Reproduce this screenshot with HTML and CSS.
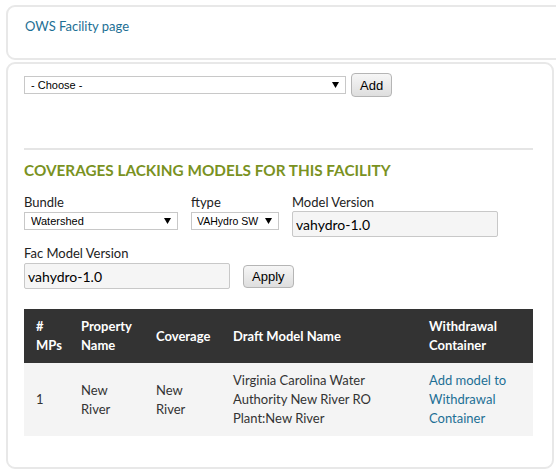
FILE: index.html
```html
<!DOCTYPE html>
<html>
<head>
<meta charset="utf-8">
<link rel="stylesheet" href="styles.css">
</head>
<body>
<div class="panel panel-top">
  <a class="link" href="#">OWS Facility page</a>
</div>
<div class="panel panel-main">
  <div class="row-add">
    <select class="sel sel-choose"><option>- Choose -</option></select>
    <button class="btn">Add</button>
  </div>
  <hr class="rule">
  <h2 class="heading">COVERAGES LACKING MODELS FOR THIS FACILITY</h2>
  <div class="filters">
    <div class="field">
      <label class="lbl">Bundle</label>
      <select class="sel sel-bundle"><option>Watershed</option></select>
    </div>
    <div class="field">
      <label class="lbl">ftype</label>
      <select class="sel sel-ftype"><option>VAHydro SW</option></select>
    </div>
    <div class="field">
      <label class="lbl">Model Version</label>
      <input class="inp inp-mv" type="text" value="vahydro-1.0">
    </div>
  </div>
  <div class="filters filters2">
    <div class="field">
      <label class="lbl">Fac Model Version</label>
      <input class="inp inp-fmv" type="text" value="vahydro-1.0">
    </div>
    <button class="btn btn-apply">Apply</button>
  </div>
  <table class="tbl">
    <thead>
      <tr>
        <th class="c1"># MPs</th>
        <th class="c2">Property Name</th>
        <th class="c3">Coverage</th>
        <th class="c4">Draft Model Name</th>
        <th class="c5">Withdrawal Container</th>
      </tr>
    </thead>
    <tbody>
      <tr>
        <td class="num">1</td>
        <td>New River</td>
        <td>New River</td>
        <td>Virginia Carolina Water Authority New River RO Plant:New River</td>
        <td><a class="link" href="#">Add model to Withdrawal Container</a></td>
      </tr>
    </tbody>
  </table>
</div>
</body>
</html>
```

FILE: styles.css
```css
html, body {
  margin: 0;
  padding: 0;
  background: #fff;
}
body {
  padding: 5px 2px 0 6px;
  font-family: Lato, "Open Sans", sans-serif;
  font-size: 13px;
  color: #333;
  overflow: hidden;
}
.panel {
  border: 2px solid #e8e8e8;
  border-radius: 9px;
  background: #fff;
}
.panel-top {
  height: 55px;
  margin-right: -20px;
  padding: 11px 0 0 17px;
  box-sizing: border-box;
}
.link {
  color: #1d6f94;
  text-decoration: none;
}
.panel-main {
  margin-top: 2px;
  height: 407px;
  box-sizing: border-box;
  padding: 9px 19px 0 16px;
}
.row-add {
  display: flex;
  align-items: center;
  gap: 5px;
  height: 24px;
}
.sel {
  appearance: none;
  -webkit-appearance: none;
  font-family: "Liberation Sans", Arial, sans-serif;
  font-size: 11px;
  height: 18px;
  line-height: 16px;
  border: 1px solid #c8c8c8;
  background-color: #fff;
  background-image: url("data:image/svg+xml;utf8,<svg xmlns='http://www.w3.org/2000/svg' width='7' height='6'><path d='M0 0 L7 0 L3.5 6 Z' fill='black'/></svg>");
  background-repeat: no-repeat;
  background-position: right 6px center;
  color: #000;
  padding: 0 4px 0 6px;
  border-radius: 0;
  box-sizing: border-box;
}
.sel-choose { width: 322px; }
.btn {
  font-family: "Liberation Sans", Arial, sans-serif;
  font-size: 13px;
  color: #000;
  height: 24px;
  padding: 0 8px;
  border: 1px solid #b5b5b5;
  border-radius: 4px;
  background: linear-gradient(#f6f6f6, #dedede);
}
.rule {
  border: 0;
  border-top: 2px solid #e5e5e5;
  margin: 51px 0 0 0;
}
.heading {
  margin: 10px 0 0 0;
  font-size: 15.3px;
  line-height: 20px;
  font-weight: bold;
  color: #7a921f;
}
.filters {
  display: flex;
  gap: 13px;
  margin-top: 13px;
}
.filters2 {
  margin-top: 7px;
  align-items: flex-end;
}
.field {
  display: flex;
  flex-direction: column;
}
.lbl {
  font-size: 13px;
  color: #222;
  line-height: 18px;
  margin-bottom: 1px;
}
.sel-bundle { width: 154px; }
.sel-ftype { width: 88px; font-size: 10.5px; padding-left: 5px; }
.inp {
  font-family: Lato, "Open Sans", sans-serif;
  font-size: 14px;
  height: 26px;
  box-sizing: border-box;
  border: 1px solid #c8c8c8;
  border-radius: 2px;
  background: #f5f5f5;
  padding: 0 3px;
  color: #000;
}
.inp-mv { width: 206px; margin-top: -1px; }
.inp-fmv { width: 206px; }
.btn-apply {
  height: 23px;
  margin-bottom: 1px;
}
.tbl {
  margin-top: 20px;
  width: 509px;
  border-collapse: collapse;
  table-layout: fixed;
}
.tbl th {
  background: #333;
  color: #fff;
  font-weight: bold;
  text-align: left;
  vertical-align: middle;
  padding: 8px 12px;
  line-height: 19px;
}
.tbl td {
  background: #f4f4f4;
  color: #333;
  vertical-align: middle;
  padding: 8px 12px;
  line-height: 19px;
}
.c1 { width: 21px; }
.c2 { width: 51px; }
.c3 { width: 53px; }
.c4 { width: 172px; }
.c5 { width: 92px; }
```
